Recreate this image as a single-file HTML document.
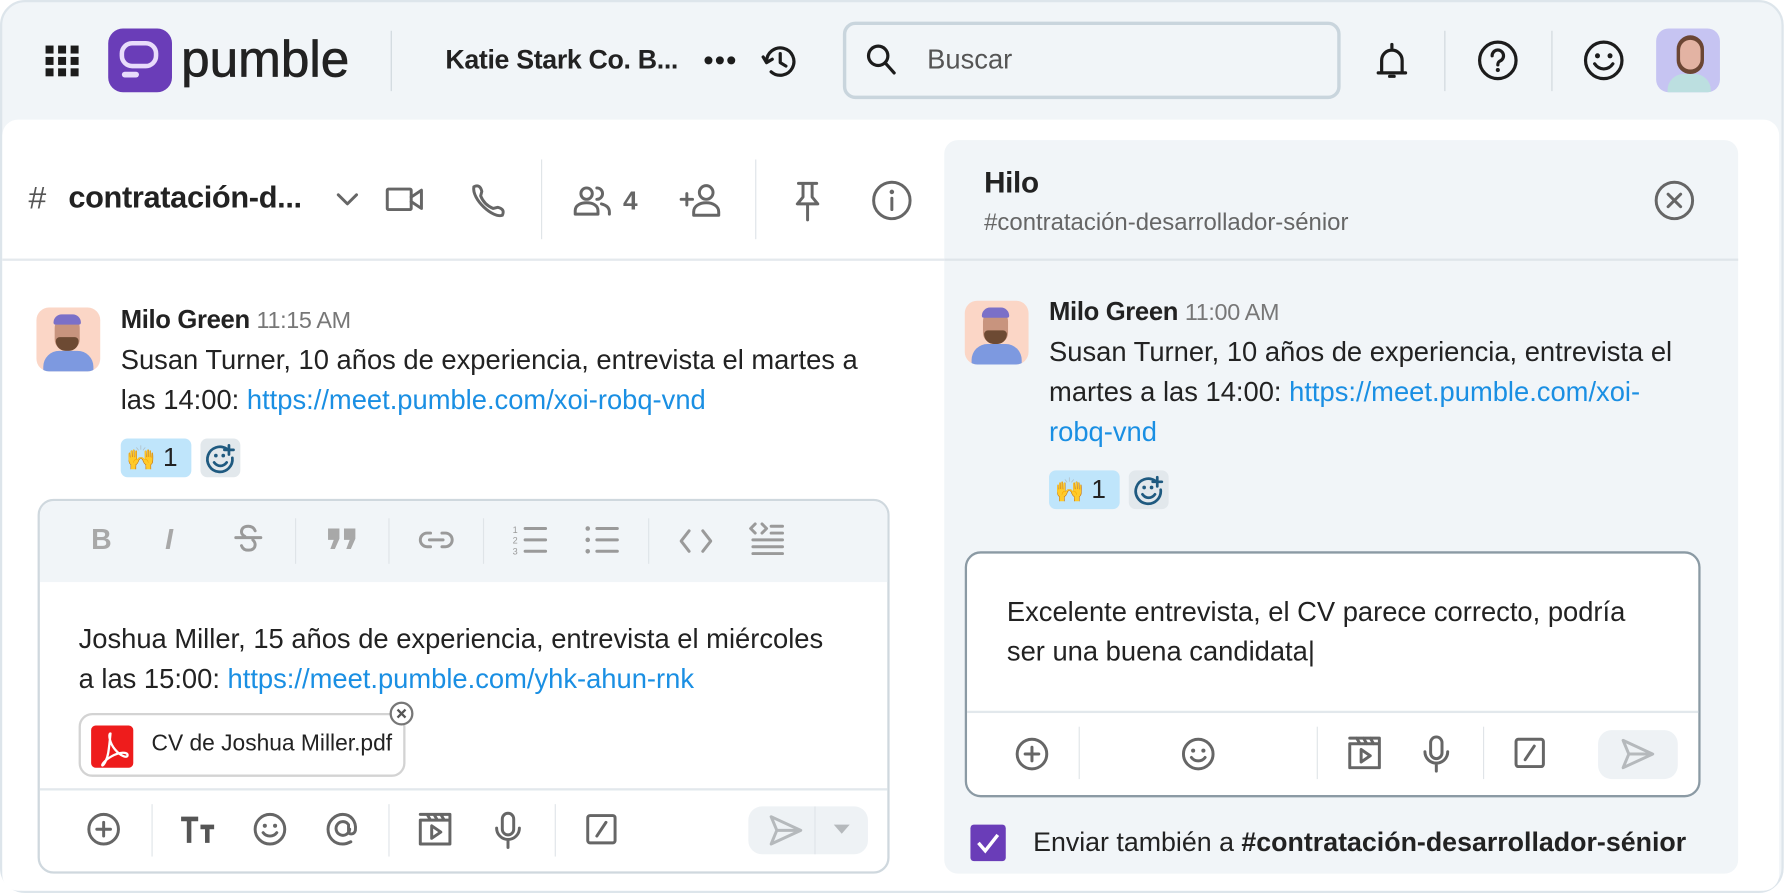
<!DOCTYPE html>
<html><head><meta charset="utf-8"><style>
*{margin:0;padding:0;box-sizing:border-box}
html,body{width:1786px;height:894px;overflow:hidden;background:#fff}
#s{width:1568px;height:785px;transform:scale(1.13903);transform-origin:0 0;position:relative;font-family:"Liberation Sans",sans-serif;color:#222}
.a{position:absolute}
.frame{left:0;top:0;width:1566px;height:784px;background:#f1f5f8;border:2px solid #dde5eb;border-radius:22px}
.main{left:2px;top:105px;width:1560px;height:677px;background:#fff;border-radius:14px}
.t{position:absolute;white-space:nowrap}
.vd{position:absolute;width:1px;background:#dfe4e8}
svg{position:absolute;overflow:visible}
.ic{fill:none;stroke:#666;stroke-width:2.6;stroke-linecap:round;stroke-linejoin:round}
.ik{fill:none;stroke:#1c1c1c;stroke-width:2.8;stroke-linecap:round;stroke-linejoin:round}
.tb{fill:none;stroke:#9a9a9a;stroke-width:2.6;stroke-linecap:round;stroke-linejoin:round}
a{color:#1a8fe3;text-decoration:none}
</style></head><body><div id="s">
<div class="a frame"></div>
<div class="a main"></div>

<!-- top bar -->
<svg style="left:40px;top:40px" width="30" height="28"><g fill="#1c1c1c"><rect x="0" y="0" width="7" height="7"/><rect x="11" y="0" width="7" height="7"/><rect x="22" y="0" width="7" height="7"/><rect x="0" y="10" width="7" height="7"/><rect x="11" y="10" width="7" height="7"/><rect x="22" y="10" width="7" height="7"/><rect x="0" y="20" width="7" height="7"/><rect x="11" y="20" width="7" height="7"/><rect x="22" y="20" width="7" height="7"/></g></svg>
<div class="a" style="left:95px;top:25px;width:56px;height:56px;background:#6a3db8;border-radius:13px"></div>
<svg style="left:95px;top:25px" width="56" height="56"><rect x="12" y="13" width="30" height="20" rx="9" fill="none" stroke="#e8dcfb" stroke-width="4"/><rect x="12" y="38" width="15" height="5" rx="2.5" fill="#e8dcfb"/></svg>
<div class="t" style="left:159px;top:26px;font-size:45px;color:#222;letter-spacing:0px;-webkit-text-stroke:0.6px #222">pumble</div>
<div class="vd" style="left:343px;top:27px;height:53px;background:#cfd6dc"></div>
<div class="t" style="left:391px;top:39px;font-size:23.5px;font-weight:bold;color:#222;letter-spacing:-0.3px">Katie Stark Co. B...</div>
<svg style="left:618px;top:49px" width="30" height="8"><g fill="#1c1c1c"><circle cx="4" cy="4" r="3.5"/><circle cx="14" cy="4" r="3.5"/><circle cx="24" cy="4" r="3.5"/></g></svg>
<svg style="left:668px;top:37px" width="34" height="34"><path class="ik" d="M5 17a12 12 0 1 1 4 9M2 13l3 5 5-3M17 10v8l5 3"/></svg>
<div class="a" style="left:740px;top:19px;width:437px;height:68px;border:3px solid #c9d5dd;border-radius:11px;background:#f1f5f8"></div>
<svg style="left:760px;top:38px" width="30" height="32"><circle class="ik" cx="11" cy="11" r="8.5"/><path class="ik" d="M17 17l8 9"/></svg>
<div class="t" style="left:814px;top:39px;font-size:24px;color:#555">Buscar</div>
<svg style="left:1207px;top:36px" width="30" height="36"><path class="ik" d="M15 3v3M6 28V17a9 9 0 0 1 18 0v11zM3 28h24M13 31h4"/></svg>
<div class="vd" style="left:1268px;top:27px;height:53px;background:#cfd6dc"></div>
<svg style="left:1297px;top:35px" width="36" height="36"><circle class="ik" cx="18" cy="18" r="16"/><path class="ik" d="M13 14a5 5 0 1 1 7 4.5c-1.5.8-2 1.5-2 3.5"/><circle cx="18" cy="26.5" r="1.8" fill="#1c1c1c"/></svg>
<div class="vd" style="left:1362px;top:27px;height:53px;background:#cfd6dc"></div>
<svg style="left:1390px;top:35px" width="36" height="36"><circle class="ik" cx="18" cy="18" r="16"/><circle cx="12.5" cy="14" r="2.2" fill="#1c1c1c"/><circle cx="23.5" cy="14" r="2.2" fill="#1c1c1c"/><path class="ik" d="M10 21c4 6 12 6 16 0"/></svg>
<div class="a" style="left:1454px;top:25px;width:56px;height:56px;background:#c6c4f2;border-radius:11px;overflow:hidden">
<div class="a" style="left:18px;top:6px;width:24px;height:34px;background:#6b4634;border-radius:12px"></div>
<div class="a" style="left:21px;top:10px;width:18px;height:26px;background:#e3b3a3;border-radius:9px"></div>
<div class="a" style="left:10px;top:40px;width:38px;height:20px;background:#bcdfe0;border-radius:14px 14px 0 0"></div>
</div>

<!-- channel header -->
<div class="t" style="left:25px;top:158px;font-size:28px;color:#555">#</div>
<div class="t" style="left:60px;top:158px;font-size:27px;font-weight:bold;color:#222;letter-spacing:-0.3px">contratación-d...</div>
<svg style="left:294px;top:168px" width="22" height="14"><path class="ic" d="M3 3l8 8 8-8"/></svg>
<svg style="left:338px;top:163px" width="36" height="24"><rect class="ic" x="2" y="3" width="21" height="18" rx="1"/><path class="ic" d="M23 10l9-6v16l-9-6"/></svg>
<svg style="left:412px;top:160px" width="34" height="34"><path class="ic" d="M4 4c4-2 6 0 7 4l-1 4c2 5 6 9 11 11l4-1c4 1 6 3 4 7-8 3-27-14-25-25z"/></svg>
<div class="vd" style="left:475px;top:140px;height:70px"></div>
<svg style="left:503px;top:162px" width="36" height="28"><circle class="ic" cx="12" cy="8" r="5"/><path class="ic" d="M2 26v-3c0-5 5-7 10-7s10 2 10 7v3zM21 3a5 5 0 0 1 0 10M25 17c4 1 7 3 7 7v2"/></svg>
<div class="t" style="left:547px;top:163px;font-size:23px;color:#666;font-weight:bold">4</div>
<svg style="left:596px;top:160px" width="40" height="32"><circle class="ic" cx="24" cy="9" r="6"/><path class="ic" d="M13 29v-3c0-5 5-8 11-8s11 3 11 8v3zM2 15h10M7 10v10"/></svg>
<div class="vd" style="left:663px;top:140px;height:70px"></div>
<svg style="left:696px;top:158px" width="28" height="38"><path class="ic" d="M5 3h16M9 3v12l-5 6h18l-5-6V3M13 21v14"/></svg>
<svg style="left:765px;top:158px" width="36" height="36"><circle class="ic" cx="18" cy="18" r="16"/><path class="ic" d="M18 16v10"/><circle cx="18" cy="10.5" r="2" fill="#666"/></svg>
<div class="a" style="left:2px;top:227px;width:827px;height:2px;background:#e4e9ed"></div>

<!-- left message -->
<div class="a" style="left:32px;top:270px;width:56px;height:56px;background:#fbd6c6;border-radius:11px;overflow:hidden">
<div class="a" style="left:16px;top:8px;width:22px;height:30px;background:#c8947e;border-radius:10px"></div>
<div class="a" style="left:15px;top:6px;width:24px;height:9px;background:#7b70c8;border-radius:8px 8px 2px 2px"></div>
<div class="a" style="left:17px;top:26px;width:20px;height:12px;background:#6d4a33;border-radius:4px 4px 10px 10px"></div>
<div class="a" style="left:6px;top:38px;width:44px;height:20px;background:#7d99e0;border-radius:14px 14px 0 0"></div>
</div>
<div class="t" style="left:106px;top:268px;font-size:22.5px;font-weight:bold;color:#222;letter-spacing:-0.3px">Milo Green <span style="font-weight:normal;color:#777;font-size:20.5px">11:15 AM</span></div>
<div class="t" style="left:106px;top:299px;font-size:24px;line-height:35px;color:#222">Susan Turner, 10 años de experiencia, entrevista el martes a<br>las 14:00: <a>https://meet.pumble.com/xoi-robq-vnd</a></div>
<div class="a" style="left:106px;top:385px;width:62px;height:34px;background:#bfe5fb;border-radius:6px"></div>
<div class="t" style="left:111px;top:388px;font-size:21px">🙌<span style="font-size:23px;margin-left:6px">1</span></div>
<div class="a" style="left:176px;top:385px;width:35px;height:34px;background:#e2e8ec;border-radius:6px"></div>
<svg style="left:180px;top:389px" width="28" height="28"><path fill="none" stroke="#1f5a80" stroke-width="2.4" stroke-linecap="round" d="M19 5A11 11 0 1 0 24 13"/><circle cx="9.5" cy="11" r="1.6" fill="#1f5a80"/><circle cx="16" cy="11" r="1.6" fill="#1f5a80"/><path fill="none" stroke="#1f5a80" stroke-width="2.4" stroke-linecap="round" d="M8 17c3 4 8 4 11 0M21 2v8M17 6h8"/></svg>

<!-- left composer -->
<div class="a" style="left:33px;top:438px;width:748px;height:329px;border:2px solid #cfd8de;border-radius:14px;background:#fff;overflow:hidden">
<div class="a" style="left:0;top:0;width:746px;height:71px;background:#f1f5f8"></div>
<div class="a" style="left:0;top:252px;width:746px;height:2px;background:#e2e8ec"></div>
</div>
<div class="t" style="left:80px;top:460px;font-size:25px;font-weight:bold;color:#a8a8a8">B</div>
<div class="t" style="left:145px;top:460px;font-size:25px;font-weight:bold;font-style:italic;color:#a8a8a8">I</div>
<svg style="left:204px;top:458px" width="28" height="30"><path class="tb" d="M20 8c-1-3-4-4-6-4-4 0-6 2-6 5 0 2 1 3 3 4M8 21c1 3 3 4 6 4 4 0 6-2 6-5 0-2-1-3-2-4M3 14h22"/></svg>
<div class="vd" style="left:259px;top:455px;height:40px"></div>
<svg style="left:287px;top:462px" width="28" height="24"><g fill="#a8a8a8"><path d="M1 2h10v9l-4 9H3l3-8H1z"/><path d="M15 2h10v9l-4 9h-4l3-8h-5z"/></g></svg>
<div class="vd" style="left:341px;top:455px;height:40px"></div>
<svg style="left:366px;top:464px" width="34" height="20"><path class="tb" d="M12 4H9a6 6 0 0 0 0 12h3M22 4h3a6 6 0 0 1 0 12h-3M11 10h12"/></svg>
<div class="vd" style="left:424px;top:455px;height:40px"></div>
<svg style="left:450px;top:460px" width="32" height="28"><path class="tb" d="M11 4h18M11 14h18M11 24h18"/><text x="0" y="8" font-size="8" fill="#9a9a9a" font-family="Liberation Sans">1</text><text x="0" y="17" font-size="8" fill="#9a9a9a" font-family="Liberation Sans">2</text><text x="0" y="27" font-size="8" fill="#9a9a9a" font-family="Liberation Sans">3</text></svg>
<svg style="left:513px;top:460px" width="32" height="28"><path class="tb" d="M11 4h18M11 14h18M11 24h18"/><circle cx="3" cy="4" r="2" fill="#9a9a9a"/><circle cx="3" cy="14" r="2" fill="#9a9a9a"/><circle cx="3" cy="24" r="2" fill="#9a9a9a"/></svg>
<div class="vd" style="left:569px;top:455px;height:40px"></div>
<svg style="left:596px;top:464px" width="30" height="22"><path class="tb" d="M9 2L2 11l7 9M21 2l7 9-7 9"/></svg>
<svg style="left:658px;top:458px" width="32" height="32"><path class="tb" d="M5 2L1 6l4 4M11 2l4 4-4 4M19 4h10M19 10h10M3 16h26M3 22h26M3 28h26"/></svg>
<div class="t" style="left:69px;top:544px;font-size:24px;line-height:35px;color:#222">Joshua Miller, 15 años de experiencia, entrevista el miércoles<br>a las 15:00: <a>https://meet.pumble.com/yhk-ahun-rnk</a></div>
<div class="a" style="left:69px;top:626px;width:287px;height:56px;border:2px solid #d3d3d3;border-radius:12px;background:#fff"></div>
<div class="a" style="left:80px;top:637px;width:37px;height:37px;background:#ee1c1c;border-radius:4px"></div>
<svg style="left:80px;top:637px" width="37" height="37"><path fill="none" stroke="#fff" stroke-width="2" stroke-linejoin="round" d="M17 7c-2 0-1 8 4 14s11 8 11 5-7-3-14 1-9 8-8 8 4-5 5-11 2-17 2-17z"/></svg>
<div class="t" style="left:133px;top:642px;font-size:20px;color:#222">CV de Joshua Miller.pdf</div>
<div class="a" style="left:342px;top:616px;width:21px;height:21px;border-radius:50%;background:#fff;border:2px solid #777"></div>
<svg style="left:342px;top:616px" width="21" height="21"><path stroke="#555" stroke-width="2" d="M7 7l7 7M14 7l-7 7"/></svg>
<!-- left bottom icons -->
<svg style="left:76px;top:713px" width="30" height="30"><circle class="ic" cx="15" cy="15" r="13"/><path class="ic" d="M15 9v12M9 15h12"/></svg>
<div class="vd" style="left:133px;top:706px;height:46px"></div>
<svg style="left:158px;top:716px" width="32" height="26"><path fill="none" stroke="#555" stroke-width="4" d="M1 3h15M8 3v21M18 10h12M24 10v14"/></svg>
<svg style="left:222px;top:713px" width="30" height="30"><circle class="ic" cx="15" cy="15" r="13"/><circle cx="10.5" cy="12" r="1.8" fill="#666"/><circle cx="19.5" cy="12" r="1.8" fill="#666"/><path class="ic" d="M9 18c3 4 9 4 12 0"/></svg>
<svg style="left:285px;top:712px" width="32" height="32"><path class="ic" d="M22 16a6 6 0 1 1-1-4v6c0 3 5 3 6-1 1-8-4-14-11-14S3 9 3 16s5 13 13 13c3 0 5-1 7-2"/></svg>
<div class="vd" style="left:341px;top:706px;height:46px"></div>
<svg style="left:367px;top:713px" width="30" height="30"><path class="ic" d="M2 7h26v21H2zM2 2h26v5M8 2l3 5M14 2l3 5M20 2l3 5M12 12v11l8-5.5z"/></svg>
<svg style="left:434px;top:712px" width="24" height="34"><rect class="ic" x="7" y="2" width="10" height="19" rx="5"/><path class="ic" d="M2 15a10 10 0 0 0 20 0M12 25v7"/></svg>
<div class="vd" style="left:487px;top:706px;height:46px"></div>
<svg style="left:514px;top:714px" width="28" height="28"><rect class="ic" x="2" y="2" width="24" height="24" rx="2"/><path class="ic" d="M18 8l-8 12"/></svg>
<div class="a" style="left:657px;top:708px;width:105px;height:42px;background:#eef2f5;border-radius:12px"></div>
<div class="vd" style="left:715px;top:708px;height:42px;background:#dfe4e8"></div>
<svg style="left:674px;top:714px" width="32" height="30"><path fill="none" stroke="#b5b9bc" stroke-width="2.6" stroke-linejoin="round" d="M3 3l26 12L3 27l5-12zM8 15h21"/></svg>
<svg style="left:732px;top:724px" width="14" height="10"><path d="M0 0h14L7 8z" fill="#b5b9bc"/></svg>

<!-- thread panel -->
<div class="a" style="left:829px;top:123px;width:697px;height:644px;background:#f1f5f8;border-radius:12px"></div>
<div class="a" style="left:829px;top:227px;width:697px;height:2px;background:#dfe5ea"></div>
<div class="t" style="left:864px;top:145px;font-size:26px;color:#222;font-weight:bold;letter-spacing:-0.3px">Hilo</div>
<div class="t" style="left:864px;top:184px;font-size:21px;color:#666">#contratación-desarrollador-sénior</div>
<svg style="left:1452px;top:158px" width="36" height="36"><circle class="ic" cx="18" cy="18" r="16"/><path class="ic" stroke-width="3" d="M12.5 12.5l11 11M23.5 12.5l-11 11"/></svg>

<div class="a" style="left:847px;top:264px;width:56px;height:56px;background:#fbd6c6;border-radius:11px;overflow:hidden">
<div class="a" style="left:16px;top:8px;width:22px;height:30px;background:#c8947e;border-radius:10px"></div>
<div class="a" style="left:15px;top:6px;width:24px;height:9px;background:#7b70c8;border-radius:8px 8px 2px 2px"></div>
<div class="a" style="left:17px;top:26px;width:20px;height:12px;background:#6d4a33;border-radius:4px 4px 10px 10px"></div>
<div class="a" style="left:6px;top:38px;width:44px;height:20px;background:#7d99e0;border-radius:14px 14px 0 0"></div>
</div>
<div class="t" style="left:921px;top:261px;font-size:22.5px;font-weight:bold;color:#222;letter-spacing:-0.3px">Milo Green <span style="font-weight:normal;color:#777;font-size:20.5px">11:00 AM</span></div>
<div class="t" style="left:921px;top:292px;font-size:24px;line-height:35px;color:#222">Susan Turner, 10 años de experiencia, entrevista el<br>martes a las 14:00: <a>https://meet.pumble.com/xoi-</a><br><a>robq-vnd</a></div>
<div class="a" style="left:921px;top:413px;width:62px;height:34px;background:#bfe5fb;border-radius:6px"></div>
<div class="t" style="left:926px;top:416px;font-size:21px">🙌<span style="font-size:23px;margin-left:6px">1</span></div>
<div class="a" style="left:991px;top:413px;width:35px;height:34px;background:#e2e8ec;border-radius:6px"></div>
<svg style="left:995px;top:417px" width="28" height="28"><path fill="none" stroke="#1f5a80" stroke-width="2.4" stroke-linecap="round" d="M19 5A11 11 0 1 0 24 13"/><circle cx="9.5" cy="11" r="1.6" fill="#1f5a80"/><circle cx="16" cy="11" r="1.6" fill="#1f5a80"/><path fill="none" stroke="#1f5a80" stroke-width="2.4" stroke-linecap="round" d="M8 17c3 4 8 4 11 0M21 2v8M17 6h8"/></svg>

<div class="a" style="left:847px;top:484px;width:646px;height:216px;border:2px solid #8b9aa4;border-radius:14px;background:#fff"></div>
<div class="a" style="left:849px;top:624px;width:642px;height:2px;background:#e2e8ec"></div>
<div class="t" style="left:884px;top:520px;font-size:24px;line-height:35px;color:#222">Excelente entrevista, el CV parece correcto, podría<br>ser una buena candidata|</div>
<svg style="left:891px;top:647px" width="30" height="30"><circle class="ic" cx="15" cy="15" r="13"/><path class="ic" d="M15 9v12M9 15h12"/></svg>
<div class="vd" style="left:947px;top:638px;height:46px"></div>
<svg style="left:1037px;top:647px" width="30" height="30"><circle class="ic" cx="15" cy="15" r="13"/><circle cx="10.5" cy="12" r="1.8" fill="#666"/><circle cx="19.5" cy="12" r="1.8" fill="#666"/><path class="ic" d="M9 18c3 4 9 4 12 0"/></svg>
<div class="vd" style="left:1156px;top:638px;height:46px"></div>
<svg style="left:1183px;top:646px" width="30" height="30"><path class="ic" d="M2 7h26v21H2zM2 2h26v5M8 2l3 5M14 2l3 5M20 2l3 5M12 12v11l8-5.5z"/></svg>
<svg style="left:1249px;top:645px" width="24" height="34"><rect class="ic" x="7" y="2" width="10" height="19" rx="5"/><path class="ic" d="M2 15a10 10 0 0 0 20 0M12 25v7"/></svg>
<div class="vd" style="left:1302px;top:638px;height:46px"></div>
<svg style="left:1329px;top:647px" width="28" height="28"><rect class="ic" x="2" y="2" width="24" height="24" rx="2"/><path class="ic" d="M18 8l-8 12"/></svg>
<div class="a" style="left:1403px;top:641px;width:70px;height:43px;background:#eef2f5;border-radius:12px"></div>
<svg style="left:1422px;top:647px" width="32" height="30"><path fill="none" stroke="#b5b9bc" stroke-width="2.6" stroke-linejoin="round" d="M3 3l26 12L3 27l5-12zM8 15h21"/></svg>

<div class="a" style="left:852px;top:724px;width:31px;height:32px;background:#6a3db8;border-radius:3px"></div>
<svg style="left:852px;top:724px" width="31" height="32"><path fill="none" stroke="#fff" stroke-width="3" d="M7 16l6 7 11-14"/></svg>
<div class="t" style="left:907px;top:726px;font-size:23.5px;color:#222">Enviar también a <b>#contratación-desarrollador-sénior</b></div>
</div></body></html>
